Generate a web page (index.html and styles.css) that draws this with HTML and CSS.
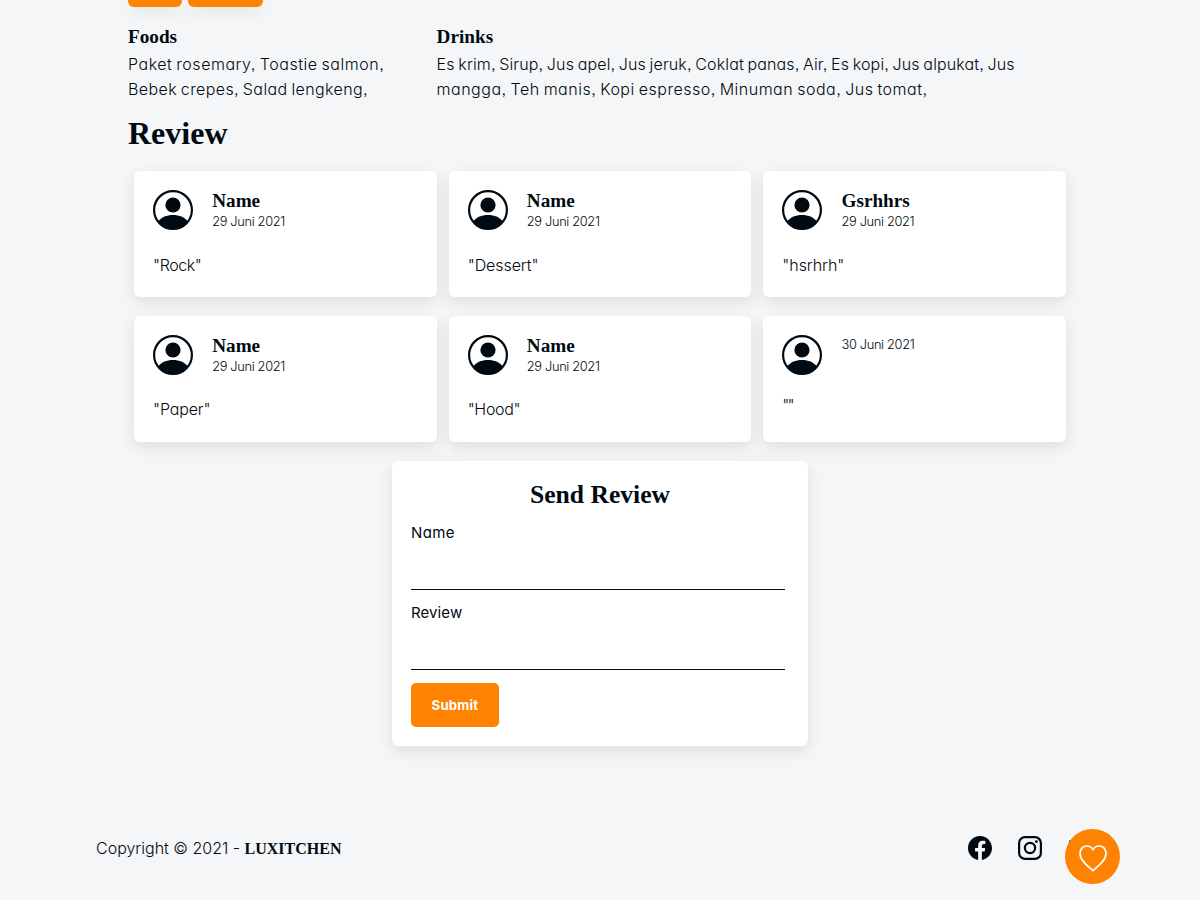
FILE: index.html
```html
<!DOCTYPE html>
<html lang="id">
<head>
<meta charset="utf-8">
<title>Luxitchen</title>
<link rel="stylesheet" href="styles.css">
</head>
<body>
<svg class="sprite" aria-hidden="true">
  <symbol id="person" viewBox="0 0 40 40">
    <clipPath id="face"><circle cx="20" cy="20" r="19"/></clipPath>
    <circle cx="20" cy="20" r="18.9" fill="none" stroke="currentColor" stroke-width="2.2"/>
    <circle cx="20" cy="15" r="7.6" fill="currentColor"/>
    <path clip-path="url(#face)" d="M5 31.500C8.500 27 13.500 24.900 20 24.900s11.500 2.100 15 6.600V40H5z" fill="currentColor"/>
  </symbol>
</svg>
<main class="main">
  <div class="tags"><span class="tag tag-small"></span><span class="tag tag-wide"></span></div>
  <section class="menus">
    <div class="foods">
      <h3 class="title">Foods</h3>
      <p class="menu-text"><span class="t f1">Paket rosemary, Toastie salmon,</span><br><span class="t f2">Bebek crepes, Salad lengkeng,</span></p>
    </div>
    <div class="drinks">
      <h3 class="title">Drinks</h3>
      <p class="menu-text"><span class="t d1">Es krim, Sirup, Jus apel, Jus jeruk, Coklat panas, Air, Es kopi, Jus alpukat, Jus</span><br><span class="t d2">mangga, Teh manis, Kopi espresso, Minuman soda, Jus tomat,</span></p>
    </div>
  </section>
  <h2 class="heading">Review</h2>
  <section class="reviews">
    <article class="card"><div class="person"><svg class="avatar"><use href="#person"/></svg><div><h3 class="title name">Name</h3><p class="date">29 Juni 2021</p></div></div><p class="quote"><span class="t q1">"Rock"</span></p></article>
    <article class="card"><div class="person"><svg class="avatar"><use href="#person"/></svg><div><h3 class="title name">Name</h3><p class="date">29 Juni 2021</p></div></div><p class="quote"><span class="t q2">"Dessert"</span></p></article>
    <article class="card"><div class="person"><svg class="avatar"><use href="#person"/></svg><div><h3 class="title name">Gsrhhrs</h3><p class="date">29 Juni 2021</p></div></div><p class="quote"><span class="t q3">"hsrhrh"</span></p></article>
    <article class="card card-low"><div class="person"><svg class="avatar"><use href="#person"/></svg><div><h3 class="title name">Name</h3><p class="date">29 Juni 2021</p></div></div><p class="quote"><span class="t q4">"Paper"</span></p></article>
    <article class="card card-low"><div class="person"><svg class="avatar"><use href="#person"/></svg><div><h3 class="title name">Name</h3><p class="date">29 Juni 2021</p></div></div><p class="quote"><span class="t q5">"Hood"</span></p></article>
    <article class="card card-empty"><div class="person"><svg class="avatar"><use href="#person"/></svg><div><p class="date">30 Juni 2021</p></div></div><p class="quote"><span class="t q6">""</span></p></article>
  </section>
  <form class="form">
    <h2 class="form-title">Send Review</h2>
    <label class="label l1" for="name">Name</label>
    <input class="field" id="name" type="text">
    <label class="label l2" for="review">Review</label>
    <input class="field" id="review" type="text">
    <button class="submit" type="button">Submit</button>
  </form>
</main>
<footer class="footer">
  <p class="copy">Copyright © 2021 - <b class="brand">LUXITCHEN</b></p>
  <div class="social">
    <svg class="icon" viewBox="0 0 16 16"><path fill="currentColor" d="M16 8.049c0-4.446-3.582-8.050-8-8.050C3.580 0-.002 3.603-.002 8.050c0 4.017 2.926 7.347 6.750 7.951v-5.625h-2.030V8.050H6.750V6.275c0-2.017 1.195-3.131 3.022-3.131.876 0 1.791.157 1.791.157v1.980h-1.009c-.993 0-1.303.621-1.303 1.258v1.510h2.218l-.354 2.326H9.250V16c3.824-.604 6.750-3.934 6.750-7.951z"/></svg>
    <svg class="icon" viewBox="0 0 24 24" fill="none" stroke="currentColor" stroke-width="2.200"><rect x="1.100" y="1.100" width="21.800" height="21.800" rx="6"/><circle cx="12" cy="12" r="5.100"/><circle cx="18.400" cy="5.600" r="1.450" fill="currentColor" stroke="none"/></svg>
    <svg class="icon" viewBox="0 0 16 16"><path fill="currentColor" d="M5.026 15c6.038 0 9.341-5.003 9.341-9.334 0-.140 0-.282-.006-.422A6.685 6.685 0 0 0 16 3.542a6.658 6.658 0 0 1-1.889.518 3.301 3.301 0 0 0 1.447-1.817 6.533 6.533 0 0 1-2.087.793A3.286 3.286 0 0 0 7.875 6.030a9.325 9.325 0 0 1-6.767-3.429 3.289 3.289 0 0 0 1.018 4.382A3.323 3.323 0 0 1 .640 6.575v.045a3.288 3.288 0 0 0 2.632 3.218 3.203 3.203 0 0 1-.865.115 3.230 3.230 0 0 1-.614-.057 3.283 3.283 0 0 0 3.067 2.277A6.588 6.588 0 0 1 .780 13.580a6.320 6.320 0 0 1-.780-.045A9.344 9.344 0 0 0 5.026 15z"/></svg>
  </div>
</footer>
<button class="like" type="button" aria-label="Like"><svg class="heart" viewBox="0 0 28 27"><path d="M14 25.600C9 21.400 1 15.500 1 8.400 1 4 4 1 7.700 1c2.800 0 5 1.500 6.300 3.600C15.300 2.500 17.500 1 20.300 1 24 1 27 4 27 8.400c0 7.100-8 13-13 17.200z" fill="none" stroke="#fff" stroke-width="1.700"/></svg></button>
</body>
</html>
```
FILE: styles.css
```css
* { box-sizing: border-box; margin: 0; padding: 0; }
body {
  position: relative;
  height: 900px;
  overflow: hidden;
  background: #f4f6f8;
  color: #000a12;
  font-family: Inter, "Open Sans", sans-serif;
  font-size: 16px;
  font-weight: 300;
  line-height: 25.6px;
  font-feature-settings: "cv11", "ss03";
}
.t { white-space: nowrap; }
.sprite { position: absolute; width: 0; height: 0; }
.main { width: 944px; margin: 0 auto; }
.tags { display: flex; gap: 6px; height: 24px; }
.tag { height: 7px; border-radius: 0 0 6px 6px; background: #ff8303; box-shadow: 0 5px 15px rgba(0,0,0,.1); }
.tag-small { width: 54px; }
.tag-wide { width: 75px; }
.menus { display: grid; grid-template-columns: 308.600px 1fr; }
.title { font: bold 19.2px/26px "Liberation Serif", serif; }
.menu-text { margin-top: 2px; line-height: 25px; word-spacing: -1px; }
.f1 { letter-spacing: .52px; }
.f2 { letter-spacing: .39px; }
.d1 { letter-spacing: .14px; }
.d2 { letter-spacing: .5px; }
.heading { margin-top: 13px; font: bold 32px/37px "Liberation Serif", serif; }
.reviews { display: grid; grid-template-columns: repeat(3, 1fr); gap: 19px 12px; padding: 0 6px; margin-top: 19px; }
.card { height: 126px; padding: 19px; border-radius: 6px; background: #fff; box-shadow: 0 5px 15px rgba(0,0,0,.1); }
.person { display: flex; gap: 19.2px; height: 60px; }
.avatar { width: 40px; height: 40px; }
.name { line-height: 22px; }
.date { font-size: 12.8px; line-height: 19px; letter-spacing: -.33px; }
.quote { margin-top: 3px; }
.card-low .quote { margin-top: 2px; }
.card-empty .quote { margin-top: -2px; }
.q1 { letter-spacing: -.4px; }
.q2, .q3 { letter-spacing: -.07px; }
.q4 { letter-spacing: -.15px; }
.q5 { letter-spacing: -.33px; }
.q6 { letter-spacing: -1.8px; }
.form { width: 416px; height: 285px; margin: 19px auto 0; padding: 19px; border-radius: 6px; background: #fff; box-shadow: 0 5px 15px rgba(0,0,0,.1); }
.form-title { font: bold 25.6px/30px "Liberation Serif", serif; text-align: center; }
.label { display: block; margin-top: 13px; font-size: 15px; font-weight: 400; line-height: 20px; }
.l1 { letter-spacing: .4px; }
.l2 { letter-spacing: .1px; }
.field { display: block; width: 374px; height: 47px; border: 0; border-bottom: 1px solid #000a12; background: none; }
.submit { display: block; width: 88px; height: 44px; margin-top: 13px; border: 0; border-radius: 5px; background: #ff8303; color: #fff; font: 700 13.2px Inter, sans-serif; letter-spacing: .2px; }
.footer { display: flex; justify-content: space-between; align-items: center; width: 1008px; margin: 90px 0 0 96px; height: 24px; }
.copy { padding-top: 2px; }
.brand { font: bold 16px "Liberation Serif", serif; }
.social { display: flex; gap: 26px; margin-right: 12px; }
.icon { width: 24px; height: 24px; }
.like { position: absolute; left: 1065px; top: 829px; display: grid; place-items: center; width: 55px; height: 55px; border: 0; border-radius: 50%; background: #ff8303; }
.heart { width: 28px; height: 27px; margin-top: 3px; }
```
